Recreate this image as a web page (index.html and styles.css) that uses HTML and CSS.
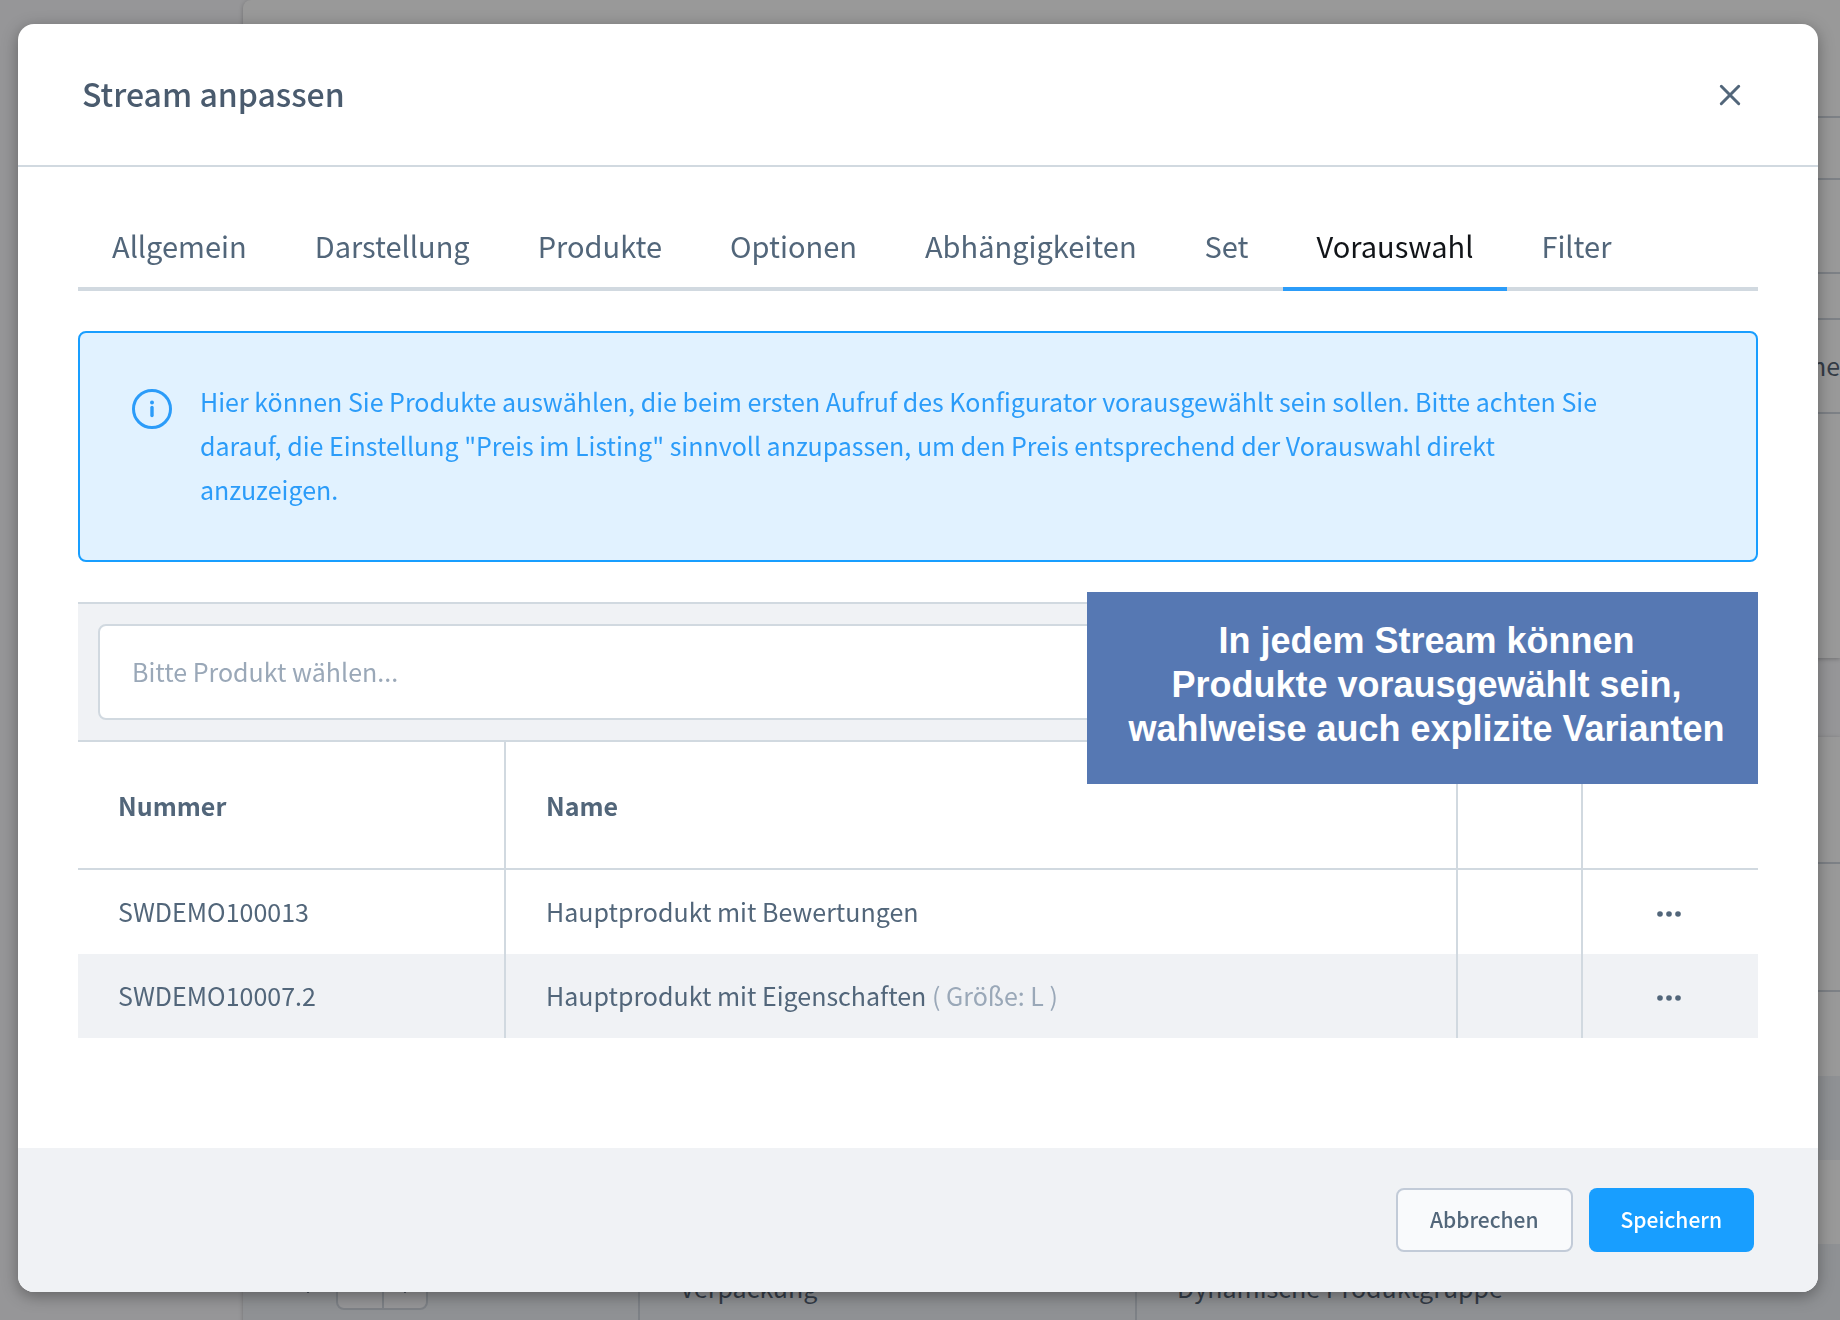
FILE: index.html
```html
<!DOCTYPE html>
<html lang="de">
<head>
<meta charset="utf-8">
<title>Stream anpassen</title>
<link rel="stylesheet" href="styles.css">
</head>
<body>
<div class="page" aria-hidden="true">
  <section class="card card-config">
    <div class="line line-a"></div>
    <div class="line line-b"></div>
    <div class="line line-c"></div>
    <div class="line line-d"></div>
    <div class="line line-e">Keine</div>
    <div class="line line-f"></div>
  </section>
  <section class="card card-streams">
    <div class="stream stream-bar"></div>
    <div class="stream stream-head"></div>
    <div class="stream"></div>
    <div class="stream stream-alt"></div>
    <div class="stream"></div>
    <div class="stream stream-alt stream-last">
      <div class="cell cell-pos">
        <svg class="chevron" width="16" height="14" viewBox="0 0 16 14" fill="none" stroke="currentColor" stroke-width="3"><path d="M2 4 8 12 14 4"/></svg>
        <span class="stepper"><span></span><span><svg class="chevron" width="16" height="14" viewBox="0 0 16 14" fill="none" stroke="currentColor" stroke-width="3"><path d="M2 4 8 12 14 4"/></svg></span></span>
      </div>
      <div class="cell cell-name">Verpackung</div>
      <div class="cell cell-type">Dynamische Produktgruppe</div>
    </div>
  </section>
</div>

<div class="overlay">
  <div class="modal" role="dialog" aria-modal="true" aria-labelledby="modal-title">
    <header class="modal-header">
      <h1 class="modal-title" id="modal-title">Stream anpassen</h1>
      <button class="close" type="button" aria-label="Schließen">
        <svg width="22" height="22" viewBox="0 0 22 22" fill="none" stroke="currentColor" stroke-width="3" stroke-linecap="round"><path d="M2.300 2.300 19.700 19.700M19.700 2.300 2.300 19.700"/></svg>
      </button>
    </header>

    <main class="modal-body">
      <nav class="tabs">
        <a class="tab" href="#allgemein">Allgemein</a>
        <a class="tab" href="#darstellung">Darstellung</a>
        <a class="tab" href="#produkte">Produkte</a>
        <a class="tab" href="#optionen">Optionen</a>
        <a class="tab" href="#abhaengigkeiten">Abhängigkeiten</a>
        <a class="tab" href="#set">Set</a>
        <a class="tab tab-active" href="#vorauswahl" aria-current="page">Vorauswahl</a>
        <a class="tab" href="#filter">Filter</a>
      </nav>

      <div class="alert">
        <svg class="alert-icon" width="40" height="40" viewBox="0 0 40 40" fill="none" stroke="currentColor" stroke-linecap="round"><circle cx="20" cy="20" r="18.500" stroke-width="3"/><path d="M20 18.500V26.500" stroke-width="3.400"/><circle cx="20" cy="13.500" r="2" fill="currentColor" stroke="none"/></svg>
        <p class="alert-text">Hier können Sie Produkte auswählen, die beim ersten Aufruf des Konfigurator vorausgewählt sein sollen. Bitte achten Sie darauf, die Einstellung "Preis im Listing" sinnvoll anzupassen, um den Preis entsprechend der Vorauswahl direkt anzuzeigen.</p>
      </div>

      <section class="listing">
        <div class="toolbar">
          <input class="search" type="text" placeholder="Bitte Produkt wählen..." aria-label="Bitte Produkt wählen">
        </div>
        <table class="grid">
          <colgroup><col class="col-number"><col><col class="col-extra"><col class="col-actions"></colgroup>
          <thead>
            <tr><th scope="col">Nummer</th><th scope="col">Name</th><th></th><th></th></tr>
          </thead>
          <tbody>
            <tr>
              <td>SWDEMO100013</td>
              <td>Hauptprodukt mit Bewertungen</td>
              <td></td>
              <td class="actions"><button class="more" type="button" aria-label="Aktionen"><svg width="24" height="8" viewBox="0 0 24 8" fill="currentColor"><circle cx="3" cy="4" r="2.800"/><circle cx="12" cy="4" r="2.800"/><circle cx="21" cy="4" r="2.800"/></svg></button></td>
            </tr>
            <tr>
              <td>SWDEMO10007.2</td>
              <td>Hauptprodukt mit Eigenschaften <span class="variant">( Größe: L )</span></td>
              <td></td>
              <td class="actions"><button class="more" type="button" aria-label="Aktionen"><svg width="24" height="8" viewBox="0 0 24 8" fill="currentColor"><circle cx="3" cy="4" r="2.800"/><circle cx="12" cy="4" r="2.800"/><circle cx="21" cy="4" r="2.800"/></svg></button></td>
            </tr>
          </tbody>
        </table>
        <p class="callout">In jedem Stream können<br>Produkte vorausgewählt sein,<br>wahlweise auch explizite Varianten</p>
      </section>
    </main>

    <footer class="modal-footer">
      <button class="button" type="button">Abbrechen</button>
      <button class="button button-primary" type="button">Speichern</button>
    </footer>
  </div>
</div>
</body>
</html>
```

FILE: styles.css
```css
*,
*::before,
*::after {
  box-sizing: border-box;
}

body {
  margin: 0;
  font-family: "Noto Sans CJK SC", "Noto Sans", sans-serif;
  font-size: 25px;
  line-height: 44px;
  color: #52667a;
  background: #969698;
}

/* Dimmed page behind the dialog */
.page {
  height: 100vh;
  overflow: hidden;
  padding-left: 243px;
  color: #343c47;
}

.card {
  background: #999;
  box-shadow: 0 1px 4px rgba(0, 0, 0, 0.25);
}

.card-config {
  height: 658px;
  border-radius: 8px 0 0 0;
  margin-bottom: 79px;
}

.line {
  border-bottom: 2px solid #7d8186;
}

.line-a { height: 118px; }
.line-b { height: 62px; }
.line-c { height: 94px; }
.line-d { height: 46px; }
.line-e { height: 94px; padding: 23px 0; text-align: right; }
.line-f { border: 0; }

.stream {
  height: 84px;
}

.stream-bar,
.stream-head {
  height: 127px;
  border-bottom: 2px solid #7d8186;
}

.stream-head {
  height: 128px;
}

.stream-alt {
  background: #8f9194;
}

.stream-last {
  display: flex;
}

.cell {
  padding: 21px 40px;
  border-right: 2px solid #7d8186;
}

.cell-pos {
  display: flex;
  align-items: center;
  gap: 20px;
  width: 397px;
  padding-left: 57px;
}

.cell-name { width: 497px; }
.cell-type { border: 0; }

.chevron {
  display: block;
}

.stepper {
  display: flex;
  height: 48px;
  border: 2px solid #7d8186;
  border-radius: 8px;
  background: #969698;
}

.stepper span {
  display: grid;
  place-items: center;
  width: 44px;
}

.stepper span + span {
  border-left: 2px solid #7d8186;
}

/* Dialog */
.overlay {
  position: fixed;
  inset: 0;
  display: flex;
  padding: 24px 22px 28px 18px;
}

.modal {
  flex: 1;
  display: flex;
  flex-direction: column;
  overflow: hidden;
  border-radius: 16px;
  background: #fff;
  box-shadow: 0 4px 16px rgba(0, 0, 0, 0.35);
}

.modal-header {
  display: flex;
  align-items: center;
  justify-content: space-between;
  padding: 47px 64px 50px;
  border-bottom: 2px solid #d1d9e0;
}

.modal-title {
  margin: 0;
  font-size: 32px;
  font-weight: 500;
  line-height: 44px;
  color: #4a5b6e;
}

.close,
.more {
  display: flex;
  border: 0;
  background: none;
  color: #52667a;
}

.close {
  padding: 13px 13px 9px;
}

.modal-body {
  flex: 1;
  padding: 40px 60px;
}

.tabs {
  display: flex;
  margin-bottom: 40px;
  box-shadow: inset 0 -4px #d1d9e0;
}

.tab {
  padding: 16px 34px 20px;
  border-bottom: 4px solid transparent;
  font-size: 29px;
  color: #52667a;
  text-decoration: none;
}

.tab-active {
  border-color: #2b9cf9;
  color: #111418;
}

.alert {
  display: flex;
  gap: 28px;
  margin-bottom: 40px;
  padding: 46px 140px 49px 52px;
  border: 2px solid #189eff;
  border-radius: 8px;
  background: #e1f2ff;
  color: #2b9cf9;
}

.alert-icon {
  flex: none;
  margin-top: 10px;
}

.alert-text {
  margin: 0;
}

.listing {
  position: relative;
}

.toolbar {
  padding: 20px;
  border: solid #d1d9e0;
  border-width: 2px 0;
  background: #f0f2f5;
}

.search {
  display: block;
  width: 100%;
  height: 96px;
  padding: 0 32px 2px;
  border: 2px solid #d1d9e0;
  border-radius: 8px;
  background: #fff;
  font: inherit;
  color: #52667a;
}

.search::placeholder {
  color: #9aa8b8;
  opacity: 1;
}

.grid {
  width: 100%;
  table-layout: fixed;
  border-collapse: separate;
  border-spacing: 0;
}

.col-number { width: 428px; }
.col-extra { width: 125px; }
.col-actions { width: 175px; }

.grid th,
.grid td {
  height: 84px;
  padding: 0 40px 2px;
  border-right: 2px solid #d1d9e0;
  text-align: left;
}

.grid th {
  height: 128px;
  padding-bottom: 0;
  border-bottom: 2px solid #d1d9e0;
  font-weight: 700;
}

.grid th:last-child,
.grid td:last-child {
  border-right: 0;
}

.grid tbody tr:nth-child(even) {
  background: #f0f2f5;
}

.grid .actions {
  padding: 4px 4px 0 0;
}

.more {
  margin: 0 auto;
  padding: 8px;
}

.variant {
  color: #9aa8b8;
}

.callout {
  position: absolute;
  top: -10px;
  right: 0;
  width: 671px;
  height: 192px;
  margin: 0;
  padding: 27px 0 0 8px;
  background: #5678b3;
  color: #fff;
  font: 700 36px/44px "Liberation Sans", Arial, sans-serif;
  text-align: center;
}

.modal-footer {
  display: flex;
  justify-content: flex-end;
  gap: 16px;
  padding: 40px 64px;
  background: #f0f2f5;
}

.button {
  height: 64px;
  padding: 0 32px 2px;
  border: 2px solid #c2cbd8;
  border-radius: 8px;
  background: #f9fafc;
  font: inherit;
  font-size: 21px;
  font-weight: 500;
  color: #52667a;
}

.button-primary {
  border: 0;
  background: #189eff;
  color: #fff;
}
```
